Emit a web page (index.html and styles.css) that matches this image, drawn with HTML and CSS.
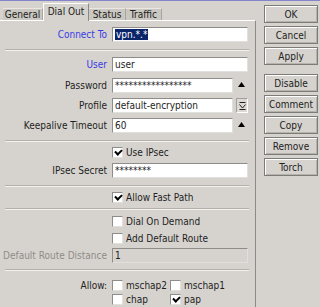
FILE: index.html
```html
<!DOCTYPE html>
<html lang="en">
<head>
    <meta charset="UTF-8">
    <title>Interface - Dial Out</title>
    <link rel="stylesheet" href="styles.css">
</head>
<body>
    <div class="window">
        <div class="main">
            <!-- Tabs -->
            <div class="tabs">
                <div class="tab t-general">General</div>
                <div class="tab active">Dial Out</div>
                <div class="tab t-status">Status</div>
                <div class="tab t-traffic">Traffic</div>
            </div>

            <div class="panel">
                <div class="row r-connect">
                    <label class="lbl blue">Connect To</label>
                    <div class="input wide"><span class="sel">vpn.*.*</span></div>
                </div>
                <div class="sep s1"></div>

                <div class="row r-user">
                    <label class="lbl blue">User</label>
                    <div class="input wide">user</div>
                </div>
                <div class="row r-pass">
                    <label class="lbl">Password</label>
                    <div class="input short">*****************</div>
                    <span class="up">
                        <svg width="7" height="5" viewBox="0 0 7 5"><path d="M3.5 0 L7 5 L0 5 Z" fill="#000"/></svg>
                    </span>
                </div>
                <div class="row r-profile">
                    <label class="lbl">Profile</label>
                    <div class="input short">default-encryption</div>
                    <span class="drop">
                        <svg width="7" height="8" viewBox="0 0 7 8"><path d="M0.5 0.5 H6.5 M0.5 2.5 L3.5 6 L6.5 2.5 M0.5 7.5 H6.5" stroke="#222" fill="none"/></svg>
                    </span>
                </div>
                <div class="row r-keep">
                    <label class="lbl">Keepalive Timeout</label>
                    <div class="input short">60</div>
                    <span class="up">
                        <svg width="7" height="5" viewBox="0 0 7 5"><path d="M3.5 0 L7 5 L0 5 Z" fill="#000"/></svg>
                    </span>
                </div>
                <div class="sep s2"></div>

                <div class="row chk r-ipsec">
                    <span class="lbl"></span>
                    <span class="box checked"></span><span class="ctext">Use IPsec</span>
                </div>
                <div class="row r-secret">
                    <label class="lbl">IPsec Secret</label>
                    <div class="input wide">********</div>
                </div>
                <div class="sep s3"></div>

                <div class="row chk r-fast">
                    <span class="lbl"></span>
                    <span class="box checked"></span><span class="ctext">Allow Fast Path</span>
                </div>
                <div class="sep s4"></div>

                <div class="row chk r-dial">
                    <span class="lbl"></span>
                    <span class="box"></span><span class="ctext">Dial On Demand</span>
                </div>
                <div class="row chk r-add">
                    <span class="lbl"></span>
                    <span class="box"></span><span class="ctext">Add Default Route</span>
                </div>
                <div class="row r-dist">
                    <label class="lbl gray">Default Route Distance</label>
                    <div class="input wide disabled">1</div>
                </div>
                <div class="sep s5"></div>

                <div class="row chk r-allow1">
                    <label class="lbl">Allow:</label>
                    <span class="opt"><span class="box"></span><span class="ctext">mschap2</span></span>
                    <span class="opt"><span class="box"></span><span class="ctext">mschap1</span></span>
                </div>
                <div class="row chk r-allow2">
                    <span class="lbl"></span>
                    <span class="opt"><span class="box"></span><span class="ctext">chap</span></span>
                    <span class="opt"><span class="box checked"></span><span class="ctext">pap</span></span>
                </div>
            </div>
        </div>

        <!-- Buttons -->
        <div class="buttons">
            <button class="btn">OK</button>
            <button class="btn">Cancel</button>
            <button class="btn">Apply</button>
            <button class="btn gap">Disable</button>
            <button class="btn">Comment</button>
            <button class="btn">Copy</button>
            <button class="btn">Remove</button>
            <button class="btn">Torch</button>
        </div>
    </div>
</body>
</html>
```

FILE: styles.css
```css
/* Basic reset */
* {
    margin: 0;
    padding: 0;
    box-sizing: border-box;
}

body {
    font-family: 'DejaVu Sans Condensed', 'DejaVu Sans', sans-serif;
    font-size: 10px;
    color: #1e1e1e;
    background-color: #d6d3ce;
    width: 320px;
    height: 307px;
    overflow: hidden;
    border-top: 1px solid #8484cc;
}

.window {
    display: flex;
    height: 306px;
}

/* Left side with tabs */
.main {
    width: 256px;
    display: flex;
    flex-direction: column;
}

.tabs {
    display: flex;
    align-items: flex-end;
    height: 19px;
    padding-left: 3px;
}

.tab {
    height: 12px;
    line-height: 11px;
    background-color: #cbc8c1;
    border-top: 1px solid #e9e7e3;
    border-right: 1px solid #a8a59f;
    color: #222;
    text-align: center;
    white-space: nowrap;
}

.t-general { width: 40px; }
.t-status { width: 37px; }
.t-traffic { width: 36px; }

.tab.active {
    width: 46px;
    height: 18px;
    line-height: 15px;
    background-color: #d6d3ce;
    border-top: 1px solid #fff;
    border-left: 1px solid #fff;
    border-right: 1px solid #8c8a86;
    margin-bottom: -1px;
    position: relative;
}

.panel {
    flex: 1;
    border-top: 1px solid #fff;
    border-right: 1px solid #8c8a86;
    display: flex;
    flex-direction: column;
}

/* Form rows */
.row {
    display: flex;
    align-items: center;
    height: 15px;
}

.row.chk {
    height: 13px;
}

.lbl {
    width: 107px;
    flex: none;
    text-align: right;
    margin-right: 5px;
    white-space: nowrap;
}

.lbl.blue { color: #3a3ae6; }
.lbl.gray { color: #8e8c88; }

.input {
    height: 15px;
    line-height: 13px;
    padding-left: 2px;
    background-color: #fff;
    border: 1px solid #8f8d89;
    border-right-color: #e2e0dc;
    border-bottom-color: #e2e0dc;
    white-space: nowrap;
    overflow: hidden;
}

.input.wide { width: 136px; }
.input.short { width: 121px; }
.input.disabled { background-color: #d6d3ce; }

.sel {
    background-color: #0a246a;
    color: #fff;
    padding: 0 1px;
}

.up {
    display: flex;
    margin-left: 5px;
    margin-top: -2px;
}

.drop {
    width: 12px;
    height: 15px;
    margin-left: 3px;
    border: 1px solid #a3a09b;
    border-right-color: #fff;
    border-bottom-color: #fff;
    display: flex;
    align-items: center;
    justify-content: center;
    background-color: #dcd9d4;
}

/* Checkboxes */
.box {
    width: 11px;
    height: 11px;
    flex: none;
    background-color: #fff;
    border: 1px solid #8f8d89;
    border-right-color: #e2e0dc;
    border-bottom-color: #e2e0dc;
    position: relative;
}

.box.checked::after {
    content: "";
    position: absolute;
    left: 2px;
    top: 1px;
    width: 5px;
    height: 3px;
    border-left: 2px solid #000;
    border-bottom: 2px solid #000;
    transform: rotate(-45deg);
}

.ctext {
    margin-left: 3px;
}

.opt {
    display: flex;
    align-items: center;
    width: 58px;
}

.sep {
    height: 2px;
    margin-left: 5px;
    margin-right: 6px;
    border-top: 1px solid #b4b1ab;
    border-bottom: 1px solid #f2f1ee;
}

/* Vertical spacing */
.r-connect { margin-top: 6px; }
.s1 { margin-top: 7px; }
.r-user { margin-top: 6px; }
.r-pass { margin-top: 6px; }
.r-profile { margin-top: 5px; }
.r-keep { margin-top: 5px; }
.s2 { margin-top: 7px; }
.r-ipsec { margin-top: 4px; }
.r-secret { margin-top: 4px; }
.s3 { margin-top: 7px; }
.r-fast { margin-top: 4px; }
.s4 { margin-top: 4px; }
.r-dial { margin-top: 5px; }
.r-add { margin-top: 4px; }
.r-dist { margin-top: 3px; }
.s5 { margin-top: 6px; }
.r-allow1 { margin-top: 8px; }
.r-allow2 { margin-top: 1px; }

/* Right buttons */
.buttons {
    display: flex;
    flex-direction: column;
    gap: 3px;
    padding-top: 4px;
    padding-left: 8px;
}

.btn {
    width: 54px;
    height: 18px;
    font-family: inherit;
    font-size: 10px;
    color: #222;
    background-color: #d6d3ce;
    border: 1px solid #7d7b77;
    box-shadow: inset 1px 1px #fff, inset -1px -1px #b6b3ad;
}

.btn.gap {
    margin-top: 6px;
}
```
